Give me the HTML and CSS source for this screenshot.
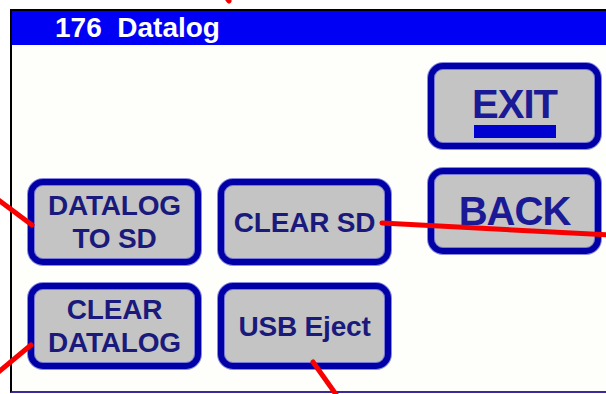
FILE: index.html
```html
<!DOCTYPE html>
<html lang="en">
<head>
  <meta charset="UTF-8" />
  <title>176 Datalog</title>
  <link rel="stylesheet" href="styles.css">
</head>
<body>
  <div class="screen">
    <div class="titlebar">176&nbsp;&nbsp;Datalog</div>
    <div class="panel">
      <div class="grid">
        <button class="key">DATALOG<br>TO SD</button>
        <button class="key">CLEAR SD</button>
        <button class="key">CLEAR<br>DATALOG</button>
        <button class="key">USB Eject</button>
      </div>
      <div class="side">
        <button class="key big exit"><span>EXIT</span><i class="bar"></i></button>
        <button class="key big">BACK</button>
      </div>
    </div>
  </div>

  <!-- callout lines drawn over the screenshot -->
  <svg class="callouts" width="606" height="394" viewBox="0 0 606 394">
    <line x1="-4" y1="198" x2="32" y2="225" />
    <line x1="31" y1="345" x2="-4" y2="374" />
    <line x1="382" y1="223" x2="610" y2="235" />
    <line x1="313" y1="362" x2="340" y2="400" />
    <line x1="226" y1="-3" x2="229" y2="1" />
  </svg>
</body>
</html>
```

FILE: styles.css
```css
* {
  box-sizing: border-box;
}

body {
  margin: 0;
  width: 606px;
  height: 394px;
  overflow: hidden;
  position: relative;
  background-color: #ffffff;
  font-family: "Liberation Sans", Arial, sans-serif;
}

.screen {
  margin: 9px 0 0 10px;
  width: 610px;
  height: 384px;
  border-top: 2px solid #000000;
  border-left: 2px solid #000000;
  border-bottom: 2px solid #3a2a9a;
  background-color: #fefefb;
}

.titlebar {
  height: 34px;
  padding-left: 43px;
  background-color: #0000f4;
  color: #ffffff;
  font-size: 28px;
  line-height: 34px;
  font-weight: bold;
}

.panel {
  display: flex;
  height: 346px;
  padding: 18px 0 22px 16px;
}

.grid {
  align-self: flex-end;
  display: grid;
  grid-template-columns: 172px 173px;
  grid-auto-rows: 86px;
  gap: 18px;
}

.side {
  display: flex;
  flex-direction: column;
  gap: 19px;
  margin-left: 37px;
}

.key {
  display: flex;
  flex-direction: column;
  align-items: center;
  justify-content: center;
  width: 173px;
  height: 86px;
  padding: 0;
  border: 6px solid #0000a6;
  border-radius: 15px;
  background-color: #c4c4c4;
  box-shadow: inset 0 0 0 1px #7a7ad8, 0 0 0 1px #8a8ae0;
  color: #1a1a7c;
  font-family: inherit;
  font-size: 28px;
  font-weight: bold;
  line-height: 33px;
  letter-spacing: -0.2px;
}

.big {
  font-size: 40px;
  line-height: 40px;
  color: #1a1a96;
  letter-spacing: -1px;
}

.exit {
  padding-top: 10px;
}

.bar {
  display: block;
  width: 82px;
  height: 13px;
  margin-top: 1px;
  background-color: #0000d0;
}

.callouts {
  position: absolute;
  left: 0;
  top: 0;
  pointer-events: none;
}

.callouts line {
  stroke: #f80000;
  stroke-width: 5;
  stroke-linecap: round;
}
```
